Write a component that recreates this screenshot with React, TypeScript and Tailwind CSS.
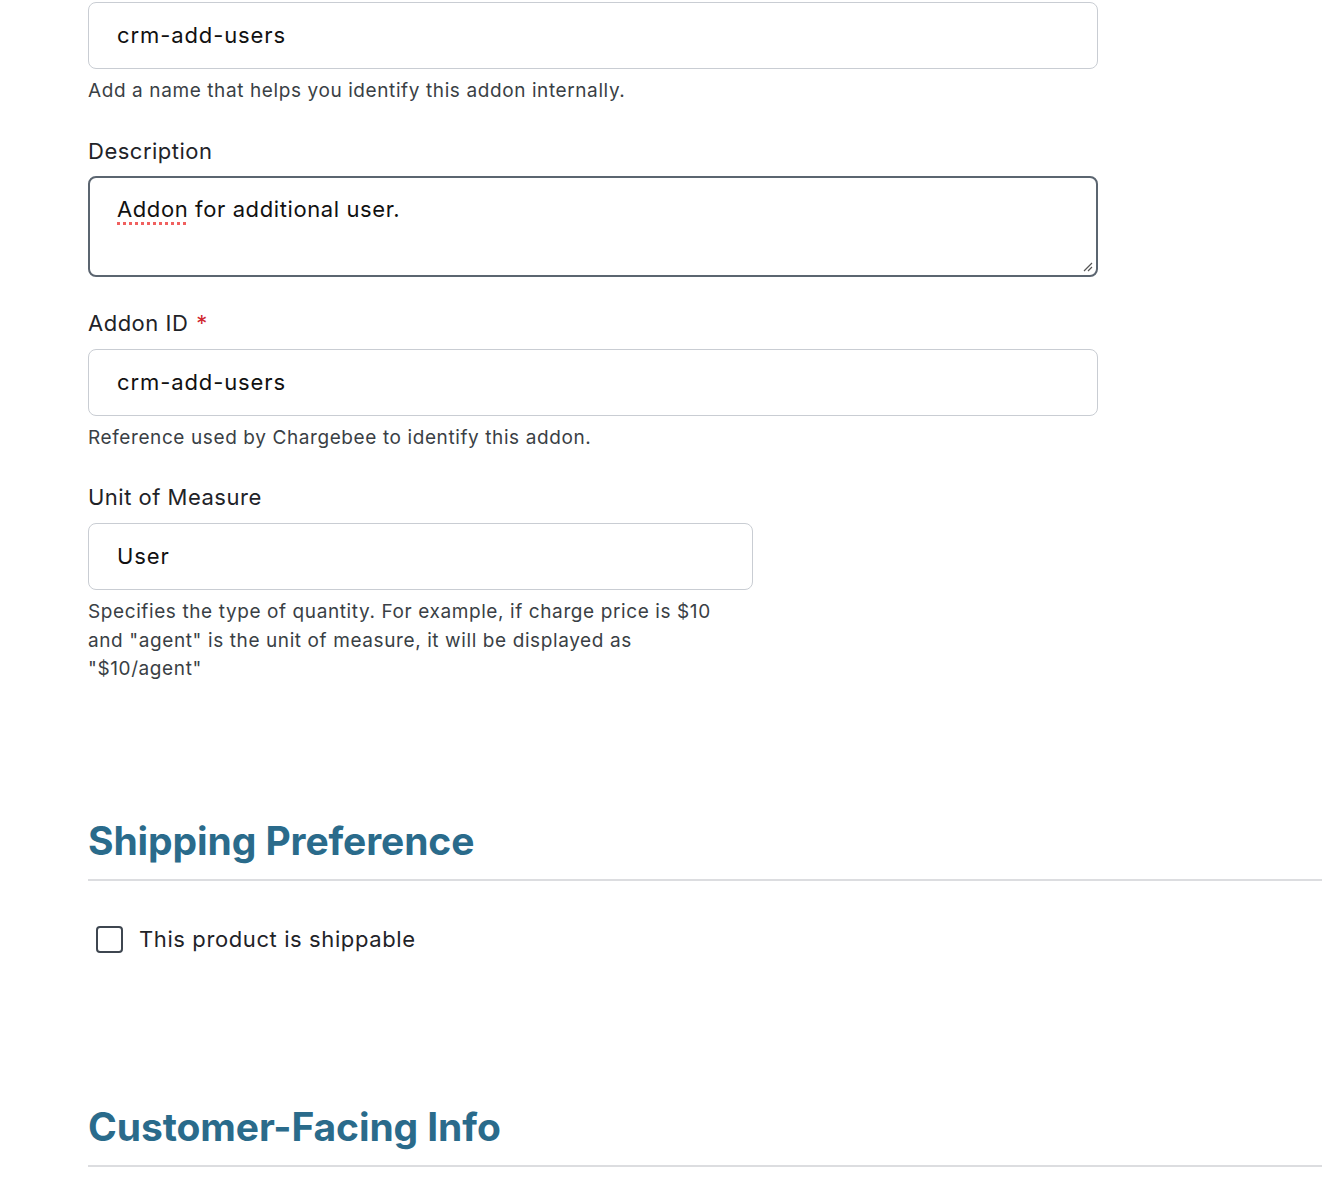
import { useState } from 'react';

const font = "font-['Inter','Noto_Sans',sans-serif]";

function Helper({ children, className = '' }: { children: React.ReactNode; className?: string }) {
  return <p className={`mt-2 text-[19px] leading-[28.5px] tracking-[0.6px] text-[#3a3f45] ${className}`}>{children}</p>;
}

function Label({ children, required, className = 'mt-[30px]' }: { children: React.ReactNode; required?: boolean; className?: string }) {
  return (
    <label className={`block text-[22px] leading-[30px] tracking-[0.5px] text-[#1f2328] ${className}`}>
      {children}
      {required && <span className="ml-2 text-[#d0262d]">*</span>}
    </label>
  );
}

function TextInput({ value }: { value: string }) {
  return (
    <div className="mt-[11px] h-[67px] flex items-center px-[28px] rounded-lg border-[1.5px] border-[#c9cdd3] bg-white text-[22px] tracking-[0.9px] text-[#111]">
      {value}
    </div>
  );
}

function SectionHeading({ title }: { title: string }) {
  return (
    <div className="border-b-2 border-[#dcdde0] pb-[14px]">
      <h2 className="text-[39px] leading-[48px] font-bold text-[#2a6b8b] tracking-[-0.1px]">{title}</h2>
    </div>
  );
}

export default function App() {
  const [shippable, setShippable] = useState(false);

  return (
    <div className={`${font} min-h-[1196px] bg-white pl-[88px] pt-[2px] overflow-hidden`}>
      <div className="w-[1010px]">
        <div className="h-[67px] flex items-center px-[28px] rounded-lg border-[1.5px] border-[#c9cdd3] bg-white text-[22px] tracking-[0.9px] text-[#111]">
          crm-add-users
        </div>
        <Helper>Add a name that helps you identify this addon internally.</Helper>

        <Label>Description</Label>
        <div className="relative mt-[10px] h-[101px] rounded-lg border-2 border-[#5b6570] bg-white px-[27px] pt-[16px] text-[22px] leading-[30px] tracking-[0.6px] text-[#111]">
          <span className="underline decoration-dotted decoration-[#f0605f] decoration-[3px] underline-offset-[5px]">Addon</span> for additional user.
          <svg className="absolute right-[3px] bottom-[3px]" width="12" height="12" viewBox="0 0 12 12">
            <path d="M11 3 L3 11 M11 7 L7 11" stroke="#555" strokeWidth="1.2" fill="none" />
          </svg>
        </div>

        <Label required className="mt-[31px]">Addon ID</Label>
        <TextInput value="crm-add-users" />
        <Helper>Reference used by Chargebee to identify this addon.</Helper>

        <Label>Unit of Measure</Label>
        <div className="w-[665px]">
          <TextInput value="User" />
          <Helper className="w-[640px]">
            Specifies the type of quantity. For example, if charge price is $10 and "agent" is the unit of measure, it will be displayed as "$10/agent"
          </Helper>
        </div>
      </div>

      <div className="mt-[133px]">
        <SectionHeading title="Shipping Preference" />
      </div>

      <label className="mt-[44px] flex items-center gap-[16px] pl-[8px] h-[30px] cursor-pointer">
        <input
          type="checkbox"
          checked={shippable}
          onChange={e => setShippable(e.target.checked)}
          className="appearance-none w-[27px] h-[27px] rounded-[4px] border-2 border-[#3e4650] bg-white"
        />
        <span className="text-[22px] tracking-[0.6px] text-[#1f2328]">This product is shippable</span>
      </label>

      <div className="mt-[148px]">
        <SectionHeading title="Customer-Facing Info" />
      </div>
    </div>
  );
}
